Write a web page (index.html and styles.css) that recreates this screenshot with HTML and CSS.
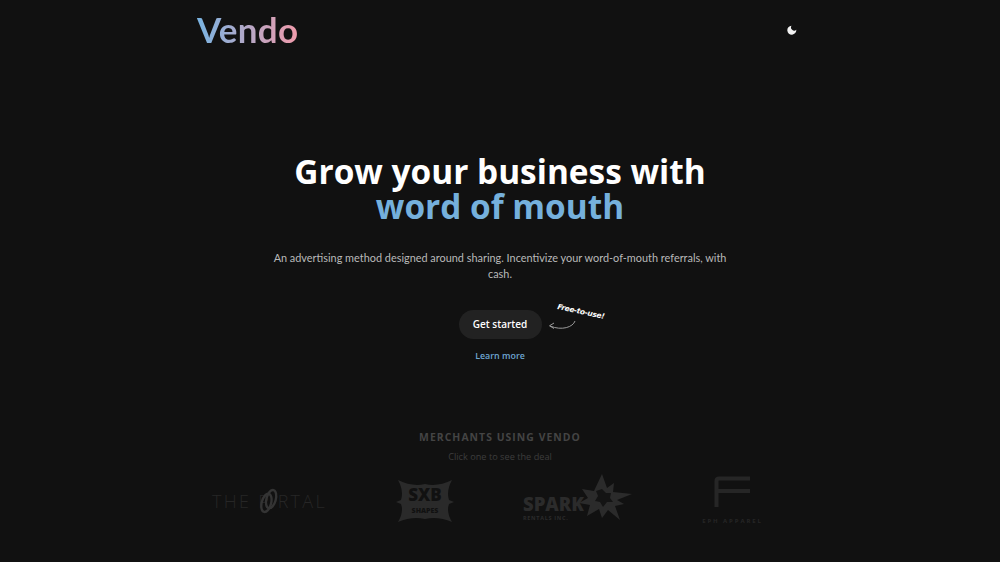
FILE: index.html
```html
<!DOCTYPE html>
<html lang="en">
<head>
    <meta charset="UTF-8">
    <meta name="viewport" content="width=device-width, initial-scale=1.0">
    <title>Vendo</title>
    <link rel="stylesheet" href="styles.css">
</head>
<body>

    <header class="nav">
        <a class="brand" href="#">Vendo</a>
        <button class="theme-toggle" aria-label="Toggle theme">
            <svg width="10" height="10" viewBox="0 0 10 10">
                <path d="M4.48 0.72 A4.5 4.5 0 1 0 9.28 4.82 A3.2 3.2 0 0 1 4.48 0.72 Z" fill="#f2f2f2"/>
            </svg>
        </button>
    </header>

    <main class="hero">
        <h1>Grow your business with <span>word of mouth</span></h1>
        <p class="lead">An advertising method designed around sharing. Incentivize your word-of-mouth referrals, with cash.</p>

        <div class="cta">
            <a class="btn" href="#">Get started</a>
            <div class="free-note">
                <span class="free-text">Free-to-use!</span>
                <svg class="free-arrow" width="32" height="14" viewBox="0 0 32 14">
                    <path d="M28 1 C26 7 15 11 3 6" fill="none" stroke="#9a9a9a" stroke-width="1"/>
                    <path d="M7 3 L2.5 5.8 L7 8.5" fill="none" stroke="#9a9a9a" stroke-width="1"/>
                </svg>
            </div>
        </div>
        <a class="learn" href="#">Learn more</a>
    </main>

    <section class="merchants">
        <h2>MERCHANTS USING VENDO</h2>
        <p>Click one to see the deal</p>

        <div class="logos">
            <div class="logo logo-portal">
                <span>THE P</span>
                <svg class="portal-ring" width="22" height="30" viewBox="0 0 22 30">
                    <ellipse cx="9" cy="17" rx="5" ry="10" fill="none" stroke="#343434" stroke-width="2.5" transform="rotate(15 9 17)"/>
                    <ellipse cx="14" cy="13" rx="5" ry="10" fill="none" stroke="#343434" stroke-width="2.5" transform="rotate(15 14 13)"/>
                </svg>
                <span>RTAL</span>
            </div>

            <div class="logo logo-sxb">
                <svg width="58" height="42" viewBox="0 0 58 42">
                    <path d="M2 0 Q16 7 29 4 Q42 7 56 0 Q50 11 53 20 L58 22 L53 24 Q50 32 56 42 Q42 36 29 39 Q16 36 2 42 Q8 32 5 24 L0 22 L5 20 Q8 11 2 0 Z" fill="#2a2a2a"/>
                </svg>
                <span class="sxb-top">SXB</span>
                <span class="sxb-bottom">SHAPES</span>
            </div>

            <div class="logo logo-spark">
                <div class="spark-words">
                    <span class="spark-name">SPARK</span>
                    <span class="spark-sub">RENTALS INC.</span>
                </div>
                <svg class="spark-star" width="54" height="48" viewBox="0 0 54 48">
                    <path d="M24 0 L29 14 L36 9 L35 18 L54 20 L39 26 L46 30 L37 32 L42 46 L30 36 L24 44 L21 35 L9 42 L12 31 L1 29 L10 24 L4 15 L16 17 Z" fill="#2b2b2b"/>
                    <path d="M24 15 L28 19 L33 19 L32 24 L35 28 L29 28 L25 33 L22 28 L17 27 L20 22 L18 17 Z" fill="#141414"/>
                </svg>
            </div>

            <div class="logo logo-eph">
                <svg width="37" height="31" viewBox="0 0 37 31">
                    <path d="M2.5 31 V5 Q2.5 2.5 5 2.5 H36 M2.5 15 H36" fill="none" stroke="#262626" stroke-width="4"/>
                </svg>
                <span>EPH APPAREL</span>
            </div>
        </div>
    </section>

</body>
</html>
```

FILE: styles.css
```css
* {
    margin: 0;
    padding: 0;
    box-sizing: border-box;
    font-family: "Open Sans", "Noto Sans", sans-serif;
}

html, body {
    height: 562px;
    overflow: hidden;
}

body {
    background-color: #111111;
    color: white;
}

.nav {
    display: flex;
    justify-content: space-between;
    align-items: center;
    width: 604px;
    height: 58px;
    margin-left: 197px;
}

.brand {
    font-family: Lato, sans-serif;
    font-size: 35px;
    font-weight: 700;
    letter-spacing: 0.3px;
    line-height: 58px;
    text-decoration: none;
    color: transparent;
    background: linear-gradient(90deg, #79b4e2, #f09bab);
    background-clip: text;
    -webkit-background-clip: text;
}

.theme-toggle {
    display: flex;
    width: 18px;
    height: 18px;
    margin-top: 2px;
    align-items: center;
    justify-content: center;
    background: none;
    border: none;
}

.hero {
    display: flex;
    flex-direction: column;
    align-items: center;
    text-align: center;
    padding-top: 96px;
}

h1 {
    width: 460px;
    font-size: 33.4px;
    font-weight: 700;
    line-height: 35px;
}

h1 span {
    display: block;
    color: #75b0dc;
}

.lead {
    width: 460px;
    margin-top: 26px;
    font-family: Lato, sans-serif;
    font-size: 10.9px;
    line-height: 16px;
    color: #b9b9b9;
}

.cta {
    position: relative;
    margin-top: 28px;
}

.btn {
    display: block;
    width: 83px;
    height: 29px;
    border-radius: 15px;
    background-color: #222222;
    color: white;
    font-size: 10px;
    font-weight: 600;
    line-height: 29px;
    text-decoration: none;
}

.free-note {
    position: absolute;
    left: 91px;
    top: -8px;
    width: 60px;
    height: 36px;
}

.free-text {
    position: absolute;
    left: 7px;
    top: 5px;
    font-family: "DejaVu Sans", sans-serif;
    font-size: 7.5px;
    font-style: italic;
    font-weight: 700;
    white-space: nowrap;
    transform: rotate(12deg);
    letter-spacing: -0.3px;
}

.free-arrow {
    position: absolute;
    left: -3px;
    top: 18px;
}

.learn {
    margin-top: 10px;
    font-size: 8.9px;
    font-weight: 600;
    line-height: 13px;
    color: #6ea6d2;
    text-decoration: none;
}

.merchants {
    text-align: center;
    margin-top: 68px;
}

.merchants h2 {
    font-size: 10.4px;
    font-weight: 700;
    letter-spacing: 1.05px;
    line-height: 14px;
    color: #444444;
}

.merchants p {
    margin-top: 6px;
    font-size: 9.2px;
    line-height: 13px;
    color: #3d3d3d;
}

.logos {
    display: flex;
    justify-content: space-between;
    align-items: flex-start;
    width: 553px;
    margin-top: 11px;
    margin-left: 212px;
}

.logo {
    position: relative;
    flex: none;
}

.logo-portal {
    display: flex;
    align-items: center;
    width: 115px;
    margin-top: 12px;
    font-size: 18px;
    font-weight: 300;
    letter-spacing: 2.3px;
    color: #262626;
    white-space: nowrap;
}

.portal-ring {
    margin: 0 -1px 0 -13px;
}

.logo-sxb {
    width: 58px;
    height: 42px;
    margin-top: 6px;
    color: #111111;
    font-weight: 800;
    text-align: center;
}

.sxb-top {
    position: absolute;
    left: 0;
    right: 0;
    top: 5px;
    font-size: 17px;
    line-height: 20px;
}

.sxb-bottom {
    position: absolute;
    left: 0;
    right: 0;
    top: 26px;
    font-size: 7px;
    line-height: 9px;
}

.logo-spark {
    display: flex;
    width: 108px;
    height: 48px;
}

.spark-words {
    display: flex;
    flex-direction: column;
    align-items: flex-start;
    padding-top: 20px;
    color: #2b2b2b;
}

.spark-name {
    font-size: 18.5px;
    font-weight: 800;
    line-height: 19px;
}

.spark-sub {
    margin-top: 1px;
    font-size: 5.5px;
    font-weight: 700;
    letter-spacing: 0.7px;
    line-height: 8px;
}

.spark-star {
    position: absolute;
    left: 55px;
    top: 0;
}

.logo-eph {
    display: flex;
    flex-direction: column;
    align-items: center;
    width: 65px;
    margin-top: 2px;
    gap: 10px;
    color: #262626;
    font-size: 6px;
    font-weight: 700;
    letter-spacing: 1.9px;
    line-height: 8px;
    white-space: nowrap;
}
```
